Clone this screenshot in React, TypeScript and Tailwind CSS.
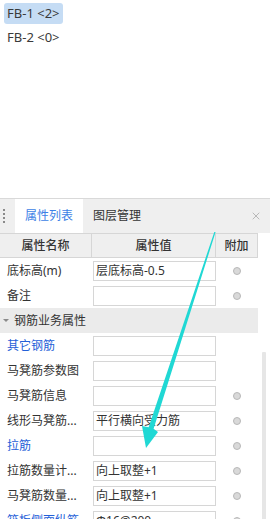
import React from "react";
import { X } from "lucide-react";

type Row =
  | { kind: "row"; label: string; value?: string; blue?: boolean; circle?: boolean }
  | { kind: "section"; label: string };

const rows: Row[] = [
  { kind: "row", label: "底标高(m)", value: "层底标高-0.5", circle: true },
  { kind: "row", label: "备注", value: "", circle: true },
  { kind: "section", label: "钢筋业务属性" },
  { kind: "row", label: "其它钢筋", blue: true, value: "" },
  { kind: "row", label: "马凳筋参数图", value: "" },
  { kind: "row", label: "马凳筋信息", value: "", circle: true },
  { kind: "row", label: "线形马凳筋...", value: "平行横向受力筋", circle: true },
  { kind: "row", label: "拉筋", blue: true, value: "", circle: true },
  { kind: "row", label: "拉筋数量计...", value: "向上取整+1", circle: true },
  { kind: "row", label: "马凳筋数量...", value: "向上取整+1", circle: true },
  { kind: "row", label: "筏板侧面纵筋", blue: true, value: "Φ16@200", circle: true },
];

export default function App() {
  return (
    <div className="relative w-[270px] h-[519px] overflow-hidden bg-white font-['Noto_Sans','Noto_Sans_CJK_SC',sans-serif] text-[#333]">
      {/* list area */}
      <div className="h-[198px] flex flex-col items-start pt-[3px] pl-[4px] gap-[3px]">
        <div className="h-[21px] px-[3px] rounded-[3px] bg-[#c5dcf4] flex items-center text-[13px] leading-none text-[#3a3a3a]">
          FB-1 &lt;2&gt;
        </div>
        <div className="h-[21px] px-[3px] flex items-center text-[13px] leading-none text-[#3a3a3a]">
          FB-2 &lt;0&gt;
        </div>
      </div>

      {/* tab bar */}
      <div className="border-t border-[#d9d9d9] h-[35px] bg-[#efefef] flex items-stretch">
        <div className="w-[15px] flex flex-col items-center justify-center gap-[2px] pr-[7px]">
          <div className="w-[2px] h-[2px] bg-[#8a8a8a]" />
          <div className="w-[2px] h-[2px] bg-[#8a8a8a]" />
          <div className="w-[2px] h-[2px] bg-[#8a8a8a]" />
          <div className="w-[2px] h-[2px] bg-[#8a8a8a]" />
        </div>
        <div className="w-[68px] bg-white flex items-center justify-center text-[12px] text-[#3d7fe6]">
          属性列表
        </div>
        <div className="pl-[10px] flex items-center text-[12px] text-[#333]">图层管理</div>
        <div className="flex-1" />
        <div className="w-[26px] flex items-center justify-center pr-[2px] text-[#9a9a9a]">
          <X size={12} strokeWidth={1.3} />
        </div>
      </div>

      {/* header */}
      <div className="flex h-[25px]">
        <div className="w-[258px] flex border-y border-r border-[#d6d6d6] bg-[#efefef] text-[12px] font-medium text-[#333]">
          <div className="w-[92px] border-r border-[#d6d6d6] flex items-center justify-center">属性名称</div>
          <div className="w-[124px] border-r border-[#d6d6d6] flex items-center justify-center">属性值</div>
          <div className="flex-1 flex items-center justify-center">附加</div>
        </div>
      </div>

      {/* body */}
      <div className="flex">
        <div className="w-[258px] flex flex-col">
          {rows.map((r, i) =>
            r.kind === "section" ? (
              <div key={i} className="h-[25px] bg-[#ebebeb] flex items-center text-[12px] text-[#333]">
                <span className="w-[14px] flex justify-center pr-[2px]">
                  <span className="block w-0 h-0 border-l-[3px] border-r-[3px] border-t-[3px] border-l-transparent border-r-transparent border-t-[#8a8a8a]" />
                </span>
                {r.label}
              </div>
            ) : (
              <div key={i} className="h-[25px] flex items-center text-[12px]">
                <div className={`w-[93px] pl-[7px] whitespace-nowrap overflow-hidden ${r.blue ? "text-[#2460d8]" : "text-[#333]"}`}>
                  {r.label}
                </div>
                <div className="w-[123px] h-[20px] border border-[#d6d6d6] bg-white flex items-center pl-[2px] whitespace-nowrap overflow-hidden text-[#333]">
                  {r.value}
                </div>
                <div className="flex-1 flex items-center justify-center pr-[1px]">
                  {r.circle && (
                    <div className="w-[8px] h-[8px] rounded-full bg-[#d9d9d9] border border-[#b8b8b8]" />
                  )}
                </div>
              </div>
            )
          )}
        </div>
        <div className="flex-1 flex justify-center pt-[94px]">
          <div className="w-[4px] h-[200px] bg-[#e6e6e6] rounded-[1px]" />
        </div>
      </div>

      {/* annotation arrow */}
      <svg className="absolute left-0 top-0 pointer-events-none" width="270" height="519" viewBox="0 0 270 519">
        <polygon
          points="214.3,232 215.6,232 153.6,428.8 158,432 146,448 142,426 148.6,427.2"
          fill="#20d8d4"
        />
      </svg>
    </div>
  );
}
